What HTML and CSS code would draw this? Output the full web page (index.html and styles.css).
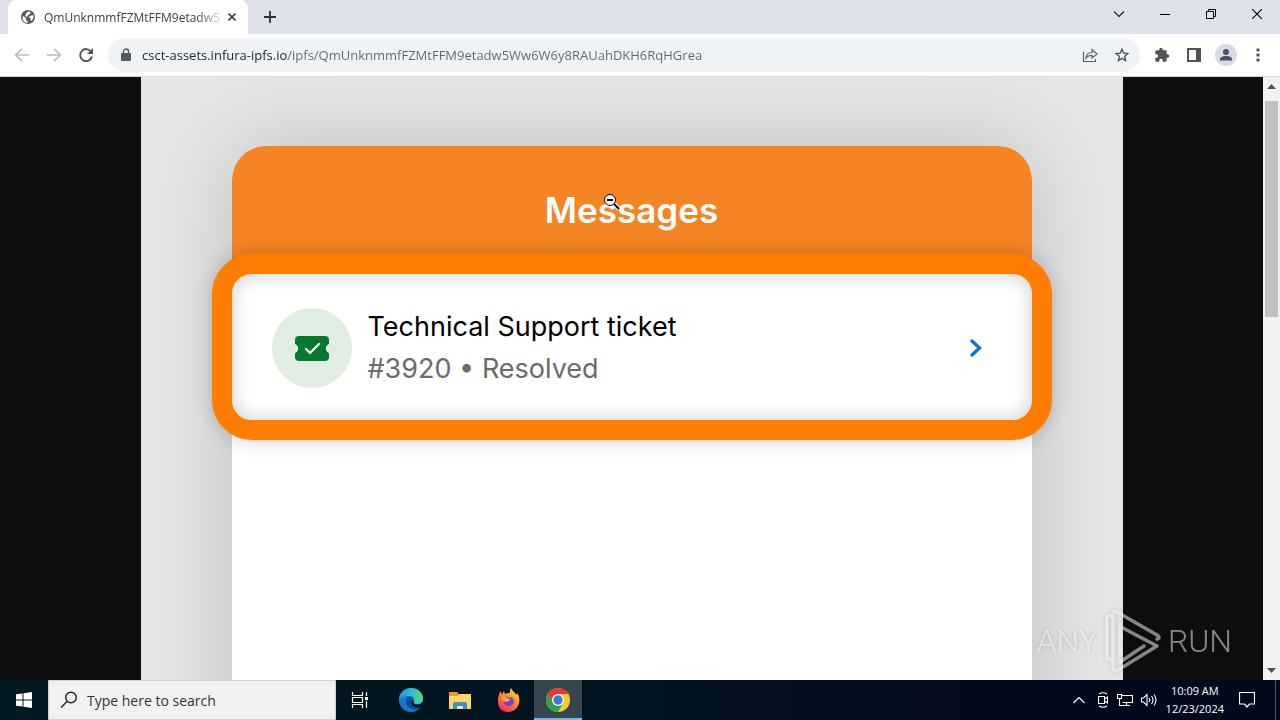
FILE: index.html
```html
<!DOCTYPE html>
<html lang="en">
<head>
  <meta charset="UTF-8">
  <meta name="viewport" content="width=device-width, initial-scale=1.0">
  <title>Messages</title>
  <link rel="stylesheet" href="styles.css">
</head>
<body>
  <header class="tab-strip">
    <div class="tab">
      <svg class="globe" width="14" height="14" viewBox="0 0 14 14"><circle cx="7" cy="7" r="7" fill="#55595e"/><path d="M2 6l3 2v2l2 2-1 1C3 12 1 10 1.500 7zM6 2l3-.5.5 2L7 5 6 7 4 6zM9 6l3-1 .8 2-2 4-1.500-1 .3-2-2-.6z" fill="#fff"/></svg>
      <span class="tab-title">QmUnknmmfFZMtFFM9etadw5</span>
      <button class="tab-close" aria-label="Close tab"><svg width="8" height="8" viewBox="0 0 8 8"><path d="M.5.5l7 7M7.500.5l-7 7" stroke="#3c4043" stroke-width="1.600"/></svg></button>
    </div>
    <button class="new-tab" aria-label="New tab"><svg width="12" height="12" viewBox="0 0 12 12"><path d="M6 0v12M0 6h12" stroke="#303338" stroke-width="1.800"/></svg></button>
    <div class="window-buttons">
      <button aria-label="Search tabs"><svg width="12" height="12" viewBox="0 0 12 12"><path d="M1 3.500l5 5 5-5" fill="none" stroke="#222" stroke-width="1.200"/></svg></button>
      <button aria-label="Minimize"><svg width="10" height="10" viewBox="0 0 10 10"><path d="M0 5.500h10" stroke="#000"/></svg></button>
      <button aria-label="Restore"><svg width="10" height="10" viewBox="0 0 10 10"><path d="M.5 2.500h7v7h-7zM2.500 2.500v-2h7v7h-2" fill="none" stroke="#000"/></svg></button>
      <button aria-label="Close"><svg width="10" height="10" viewBox="0 0 10 10"><path d="M0 0l10 10M10 0L0 10" stroke="#000" stroke-width="1.100"/></svg></button>
    </div>
  </header>

  <nav class="toolbar">
    <button aria-label="Back"><svg width="16" height="16" viewBox="0 0 16 16"><path d="M15 8H2M8 1.800L1.800 8 8 14.200" fill="none" stroke="#b9bbbe" stroke-width="1.700"/></svg></button>
    <button aria-label="Forward"><svg width="16" height="16" viewBox="0 0 16 16"><path d="M1 8h13M8 1.800L14.200 8 8 14.200" fill="none" stroke="#b9bbbe" stroke-width="1.700"/></svg></button>
    <button aria-label="Reload"><svg width="16" height="16" viewBox="0 0 16 16"><path d="M13.200 4.800A6 6 0 1 0 14 9.500" fill="none" stroke="#505458" stroke-width="1.900"/><path d="M15 1v6H9z" fill="#505458"/></svg></button>
    <div class="address-bar">
      <svg width="10" height="14" viewBox="0 0 10 14"><path d="M2.500 6V3.500a2.500 2.500 0 0 1 5 0V6" fill="none" stroke="#55595e" stroke-width="1.400"/><rect y="5" width="10" height="8" rx="1" fill="#55595e"/></svg>
      <input type="text" aria-label="Address" value="csct-assets.infura-ipfs.io/ipfs/QmUnknmmfFZMtFFM9etadw5Ww6W6y8RAUahDKH6RqHGrea">
      <button aria-label="Share"><svg width="16" height="16" viewBox="0 0 16 16"><path d="M1.500 5v9.500h12v-2.500M4 11c.4-4 2.800-5.500 6-5.500V2.500L15 7l-5 4V8.300C7.500 8.300 5.500 9 4 11z" fill="none" stroke="#5f6368" stroke-width="1.200"/></svg></button>
      <button aria-label="Bookmark"><svg width="16" height="16" viewBox="0 0 16 16"><path d="M8 2.200l1.700 3.900 4.200.4-3.200 2.800.9 4.200L8 11.300l-3.600 2.200.9-4.200-3.200-2.800 4.200-.4z" fill="none" stroke="#505458" stroke-width="1.400"/></svg></button>
    </div>
    <button aria-label="Extensions"><svg width="16" height="16" viewBox="0 0 24 24"><path d="M20.500 11H19V7a2 2 0 0 0-2-2h-4V3.500a2.500 2.500 0 0 0-5 0V5H4a2 2 0 0 0-2 2v3.800h1.500a2.700 2.700 0 0 1 0 5.400H2V20a2 2 0 0 0 2 2h3.800v-1.500a2.700 2.700 0 0 1 5.400 0V22H17a2 2 0 0 0 2-2v-4h1.500a2.500 2.500 0 0 0 0-5z" fill="#505458"/></svg></button>
    <button aria-label="Side panel"><svg width="14" height="14" viewBox="0 0 14 14"><path d="M0 0h14v14H0zM2 2v10h7V2z" fill="#505458" fill-rule="evenodd"/></svg></button>
    <button class="profile" aria-label="Profile"><svg width="14" height="14" viewBox="0 0 14 14"><circle cx="7" cy="4" r="3" fill="#4b5168"/><path d="M1 12.500V11c0-2 3-3 6-3s6 1 6 3v1.500z" fill="#4b5168"/></svg></button>
    <button aria-label="Menu"><svg width="4" height="14" viewBox="0 0 4 14"><path d="M.5.500h3v3h-3zM.5 5.500h3v3h-3zM.5 10.500h3v3h-3z" fill="#505458"/></svg></button>
  </nav>

  <main class="viewer">
    <div class="stage">
      <section class="phone">
        <h1>Messages</h1>
        <a class="ticket" href="#">
          <span class="ticket-icon">
            <svg width="34" height="25" viewBox="0 0 34 25"><path d="M4 0h26a4 4 0 0 1 4 4v4a4.800 4.800 0 0 0 0 9v4a4 4 0 0 1-4 4H4a4 4 0 0 1-4-4v-4a4.800 4.800 0 0 0 0-9V4a4 4 0 0 1 4-4z" fill="#087a2f"/><path d="M11 13l4 4 9-9" fill="none" stroke="#fff" stroke-width="2.200" stroke-linecap="round" stroke-linejoin="round"/></svg>
          </span>
          <span class="ticket-text">
            <span class="ticket-title">Technical Support ticket</span>
            <span class="ticket-status">#3920 • Resolved</span>
          </span>
          <svg width="14" height="20" viewBox="0 0 14 20"><path d="M3 3l7.500 7L3 17" fill="none" stroke="#0b78cf" stroke-width="3.400" stroke-linecap="round"/></svg>
        </a>
      </section>
    </div>
    <div class="scrollbar">
      <svg width="9" height="5" viewBox="0 0 9 5"><path d="M0 5l4.500-5L9 5z" fill="#505050"/></svg>
      <div class="thumb"></div>
      <svg width="9" height="5" viewBox="0 0 9 5"><path d="M0 0l4.500 5L9 0z" fill="#505050"/></svg>
    </div>

    <svg class="cursor" width="18" height="18" viewBox="0 0 18 18"><path d="M11 11l5 5" stroke="#fff" stroke-width="4"/><path d="M10.500 10.500l5.500 5.500" stroke="#000" stroke-width="2"/><circle cx="7" cy="7" r="5.500" fill="#fff" stroke="#000"/><path d="M4 7h6" stroke="#000" stroke-width="2"/></svg>

    <div class="watermark">
      <span>ANY</span>
      <svg width="58" height="64" viewBox="0 0 58 64"><path d="M8 50h-5V10q0-3 3-3h3M9 56V4q0-3 4-1l40 23q4 3 0 4M15 17l38 20L14 61q-4 2-5-2M16 46V15M16 53l24-16" fill="none" stroke="currentColor" stroke-width="3.500" stroke-linejoin="round" stroke-linecap="round"/></svg>
      <span>RUN</span>
    </div>
  </main>

  <footer class="taskbar">
    <button class="start" aria-label="Start"><svg width="16" height="16" viewBox="0 0 16 16"><path d="M0 2.300L6.500 1.400v6.100H0zM7.500 1.200L16 0v7.500H7.500zM0 8.500h6.500v6.100L0 13.700zM7.500 8.500H16V16l-8.500-1.200z" fill="#fff"/></svg></button>
    <label class="search">
      <svg width="18" height="18" viewBox="0 0 18 18"><circle cx="11" cy="6.500" r="5.300" fill="none" stroke="#222" stroke-width="1.400"/><path d="M7 10.500l-6 6" stroke="#222" stroke-width="1.400"/></svg>
      <input type="text" aria-label="Search" placeholder="Type here to search">
    </label>
    <button class="task-view" aria-label="Task view"><svg width="18" height="16" viewBox="0 0 18 16"><path d="M1.500 0v3.500h10V0M1.500 16v-3.500h10V16M1.500 5.500h10v5h-10zM15.500 0v4M15.500 9v7" fill="none" stroke="#fff" stroke-width="1.200"/><path d="M14 5h3v3h-3z" fill="#fff"/></svg></button>
    <div class="apps">
      <button aria-label="Edge"><svg width="24" height="24" viewBox="0 0 24 24">
        <defs><linearGradient id="edgeTop" x1="0" x2="1"><stop offset="0" stop-color="#2493dc"/><stop offset=".55" stop-color="#2cc0d1"/><stop offset="1" stop-color="#5ddb68"/></linearGradient></defs>
        <circle cx="12" cy="12" r="12" fill="#157ac9"/><path d="M0 12C0 5 5 0 12 0s12 5 12 10c0 4-3 6-6 6-3 0-4-1.500-3-3 1-3-1-5-5-5-5 0-9 2-10 4z" fill="url(#edgeTop)"/><path d="M9 9c-3 3-3 10 4 12 4 1 7 0 9.500-3-4 2-10 1-10-4 0-2 1-3 1-3-.5-2-3-3-4.500-2z" fill="#0c4a91"/><path d="M15 13c-1 2 0 3.500 3 3.500 2 0 4-.5 5.500-2.500l1 1-1 4h-1c-4 1.500-10 0-10-4.500 0-2 2-3 2.500-1.500z" fill="#021722"/></svg></button>
      <button aria-label="File Explorer"><svg width="22" height="19" viewBox="0 0 22 19"><path d="M0 1h8l2 2h12v4H0z" fill="#e79f1c"/><path d="M0 5h9l2-2h11v15H0z" fill="#fcd667"/><path d="M4 18v-5q0-2 2-2h10q2 0 2 2v5h-4v-3H8v3z" fill="#3d8fce"/><path d="M8 15h6v3H8z" fill="#f7e19b"/></svg></button>
      <button aria-label="Firefox"><svg width="24" height="24" viewBox="0 0 24 24">
        <defs><linearGradient id="foxBody" x1=".8" y1="0" x2=".2" y2="1"><stop offset="0" stop-color="#ffe83d"/><stop offset=".45" stop-color="#ff8a1e"/><stop offset="1" stop-color="#f3246c"/></linearGradient></defs>
        <path d="M2 7l1-4 2 3 2-3 1 3c2-1 3-1 5-1 0-2 0-4 1-5 1 3 4 4 5 7l1-2c2 3 3 6 2 10-1 5-5 9-11 9S1 20 1 13c0-2 0-4 1-6z" fill="url(#foxBody)"/><path d="M7 9c2-1 4 0 5 1 2-2 5 0 5 3 0 4-3 5-5 5-4 0-6-3-5-6l3 1 2-1z" fill="#7542d8"/><path d="M4 9c2-1 5-1 6 1l3 1c0 2-3 2-3 3-2 0-3-1-4-1z" fill="#ffad27"/></svg></button>
      <button class="active" aria-label="Chrome"><svg width="24" height="24" viewBox="0 0 24 24"><circle cx="12" cy="12" r="12" fill="#fcc934"/><path d="M12 12V6h10.400A12 12 0 0 0 1.600 6l5.200 9z" fill="#e33b2e"/><path d="M1.600 6A12 12 0 0 0 12 24l5.200-9-5.200-3-5.200 3z" fill="#2ba24c"/><circle cx="12" cy="12" r="6" fill="#fff"/><circle cx="12" cy="12" r="4.700" fill="#3b79e8"/></svg></button>
    </div>

    <div class="tray">
      <svg width="12" height="8" viewBox="0 0 12 8"><path d="M.5 7L6 1.500 11.500 7" fill="none" stroke="#fff" stroke-width="1.200"/></svg>
      <svg width="12" height="16" viewBox="0 0 12 16"><path d="M1.500 4.500h6v7h-6zM7.500 7l3-2v6l-3-2M2 2q4-2.500 8 0M2 14q4 2.500 8 0" fill="none" stroke="#fff" stroke-width="1.100"/></svg>
      <svg width="16" height="14" viewBox="0 0 16 14"><path d="M5 2.500h10.500v7H5.500M.5 1.500h4v4h-4zM2.500 5.500v7H13M9.500 9.500v3" fill="none" stroke="#fff" stroke-width="1.100"/></svg>
      <svg width="17" height="14" viewBox="0 0 17 14"><path d="M.5 5h2L6 1.500v11L2.500 9h-2zM8 5q1.500 2 0 4M10.500 3q3 4 0 8M13 1.500q4 5.500 0 11" fill="none" stroke="#fff" stroke-width="1.100"/></svg>
      <div class="clock"><span>10:09 AM</span><span>12/23/2024</span></div>
      <svg width="16" height="16" viewBox="0 0 16 16"><path d="M.5.500h15v11.500h-5L8 15l-2.500-3h-5z" fill="none" stroke="#fff" stroke-width="1.200"/></svg>
    </div>
    <div class="show-desktop"></div>
  </footer>
</body>
</html>
```
FILE: styles.css
```css
* {
  box-sizing: border-box;
}
body {
  margin: 0;
  height: 100vh;
  display: flex;
  flex-direction: column;
  overflow: hidden;
  font-family: "Open Sans", "Noto Sans", sans-serif;
  font-size: 12px;
}
button {
  display: flex;
  align-items: center;
  justify-content: center;
  flex-shrink: 0;
  padding: 0;
  border: 0;
  background: none;
}
svg {
  display: block;
  flex-shrink: 0;
}
input {
  min-width: 0;
  flex: 1;
  padding: 0;
  border: 0;
  outline: 0;
  background: none;
  font-family: inherit;
}

/* browser tabs */
.tab-strip {
  display: flex;
  flex-shrink: 0;
  height: 34px;
  padding-left: 8px;
  background: #dee1e9;
}
.tab {
  display: flex;
  align-items: center;
  width: 240px;
  padding: 0 8px 0 13px;
  border-radius: 8px 8px 0 0;
  background: #fff;
}
.tab-title {
  flex: 1;
  margin-left: 9px;
  white-space: nowrap;
  color: #3c4043;
  mask-image: linear-gradient(to right, #000 85%, transparent);
}
.tab-close {
  width: 16px;
  height: 16px;
}
.new-tab {
  width: 44px;
}
.window-buttons {
  display: flex;
  height: 28px;
  margin-left: auto;
}
.window-buttons button {
  width: 46px;
}

/* address row */
.toolbar {
  display: flex;
  align-items: center;
  flex-shrink: 0;
  height: 43px;
  padding: 0 6px;
  border-bottom: 1px solid #d5d7da;
  background: #fff;
}
.toolbar button {
  width: 32px;
  height: 32px;
}
.address-bar {
  flex: 1;
  display: flex;
  align-items: center;
  height: 34px;
  margin: 0 6px;
  padding: 0 2px 0 13px;
  border-radius: 17px;
  background: #f0f3f5;
}
.address-bar input {
  margin-left: 11px;
  font-size: 13px;
  color: transparent;
  background: linear-gradient(to right, #202124 146px, #62666b 146px);
  background-clip: text;
}
.toolbar .profile {
  width: 22px;
  height: 22px;
  margin: 0 5px;
  border-radius: 50%;
  background: #d8dbe6;
}

/* picture viewer */
.viewer {
  position: relative;
  flex: 1;
  display: flex;
  min-height: 0;
  overflow: hidden;
  background: #0e0e0e;
}
.stage {
  flex: 1;
  max-width: 982px;
  margin: 0 auto;
  padding: 69px 91px 0;
  overflow: hidden;
  background: #e6e6e6;
}
.phone {
  height: 1200px;
  border-radius: 34px;
  background: #fff;
  box-shadow: 0 0 90px rgba(0, 0, 0, 0.18);
}
.phone h1 {
  height: 148px;
  margin: 0 0 -40px;
  padding-top: 42px;
  border-radius: 34px 34px 0 0;
  background: #f58423;
  color: #fff;
  font-family: Inter, sans-serif;
  font-size: 35px;
  font-weight: 600;
  line-height: 44px;
  text-align: center;
}
.ticket {
  position: relative;
  display: flex;
  align-items: center;
  height: 186px;
  margin: 0 -20px;
  padding: 2px 49px 0 40px;
  border: 20px solid #ff7d00;
  border-radius: 40px;
  background: #fff;
  box-shadow: 0 0 20px rgba(0, 0, 0, 0.2), inset 0 0 20px rgba(0, 0, 0, 0.2);
  font-family: Inter, sans-serif;
  text-decoration: none;
}
.ticket-icon {
  display: flex;
  align-items: center;
  justify-content: center;
  width: 80px;
  height: 80px;
  border-radius: 50%;
  background: #e1ece3;
}
.ticket-text {
  flex: 1;
  display: flex;
  flex-direction: column;
  margin-left: 16px;
  font-size: 27px;
  line-height: 42px;
}
.ticket-title {
  color: #000;
}
.ticket-status {
  color: #6b6b6b;
}
.scrollbar {
  display: flex;
  flex-direction: column;
  align-items: center;
  width: 17px;
  padding: 7px 0;
  background: #f1f1f1;
}
.scrollbar .thumb {
  width: 13px;
  height: 216px;
  margin: 12px 0 auto;
  background: #c1c1c1;
}
.cursor {
  position: absolute;
  left: 603px;
  top: 116px;
}
.watermark {
  position: absolute;
  right: 48px;
  bottom: 7px;
  display: flex;
  align-items: center;
  gap: 6px;
  color: rgba(255, 255, 255, 0.5);
  filter: drop-shadow(0 0 2px rgba(0, 0, 0, 0.3));
  font-family: Roboto, sans-serif;
  font-size: 32px;
  font-weight: 300;
}

/* windows taskbar */
.taskbar {
  display: flex;
  flex-shrink: 0;
  height: 40px;
  background: linear-gradient(to right, #021a22, #03131f 50%, #020a1c 80%);
  color: #fff;
}
.start,
.task-view {
  width: 48px;
}
.search {
  display: flex;
  align-items: center;
  gap: 9px;
  width: 288px;
  padding-left: 11px;
  border: 1px solid #cfcfcf;
  background: #f1f1f1;
}
.search input {
  font-size: 14px;
}
.search input::placeholder {
  color: #333;
}
.apps {
  display: flex;
  gap: 1px;
  margin-left: 3px;
}
.apps button {
  width: 48px;
}
.apps .active {
  padding-top: 2px;
  border-bottom: 2px solid #76b9ed;
  background: #35464e;
}
.tray {
  display: flex;
  align-items: center;
  gap: 8px;
  margin-left: auto;
}
.tray svg:first-child {
  margin-right: 4px;
}
.clock {
  display: flex;
  flex-direction: column;
  margin-right: 7px;
  font-size: 11px;
  line-height: 18px;
  text-align: center;
}
.show-desktop {
  width: 5px;
  margin-left: 20px;
  border-left: 1px solid #4a5260;
}
```
